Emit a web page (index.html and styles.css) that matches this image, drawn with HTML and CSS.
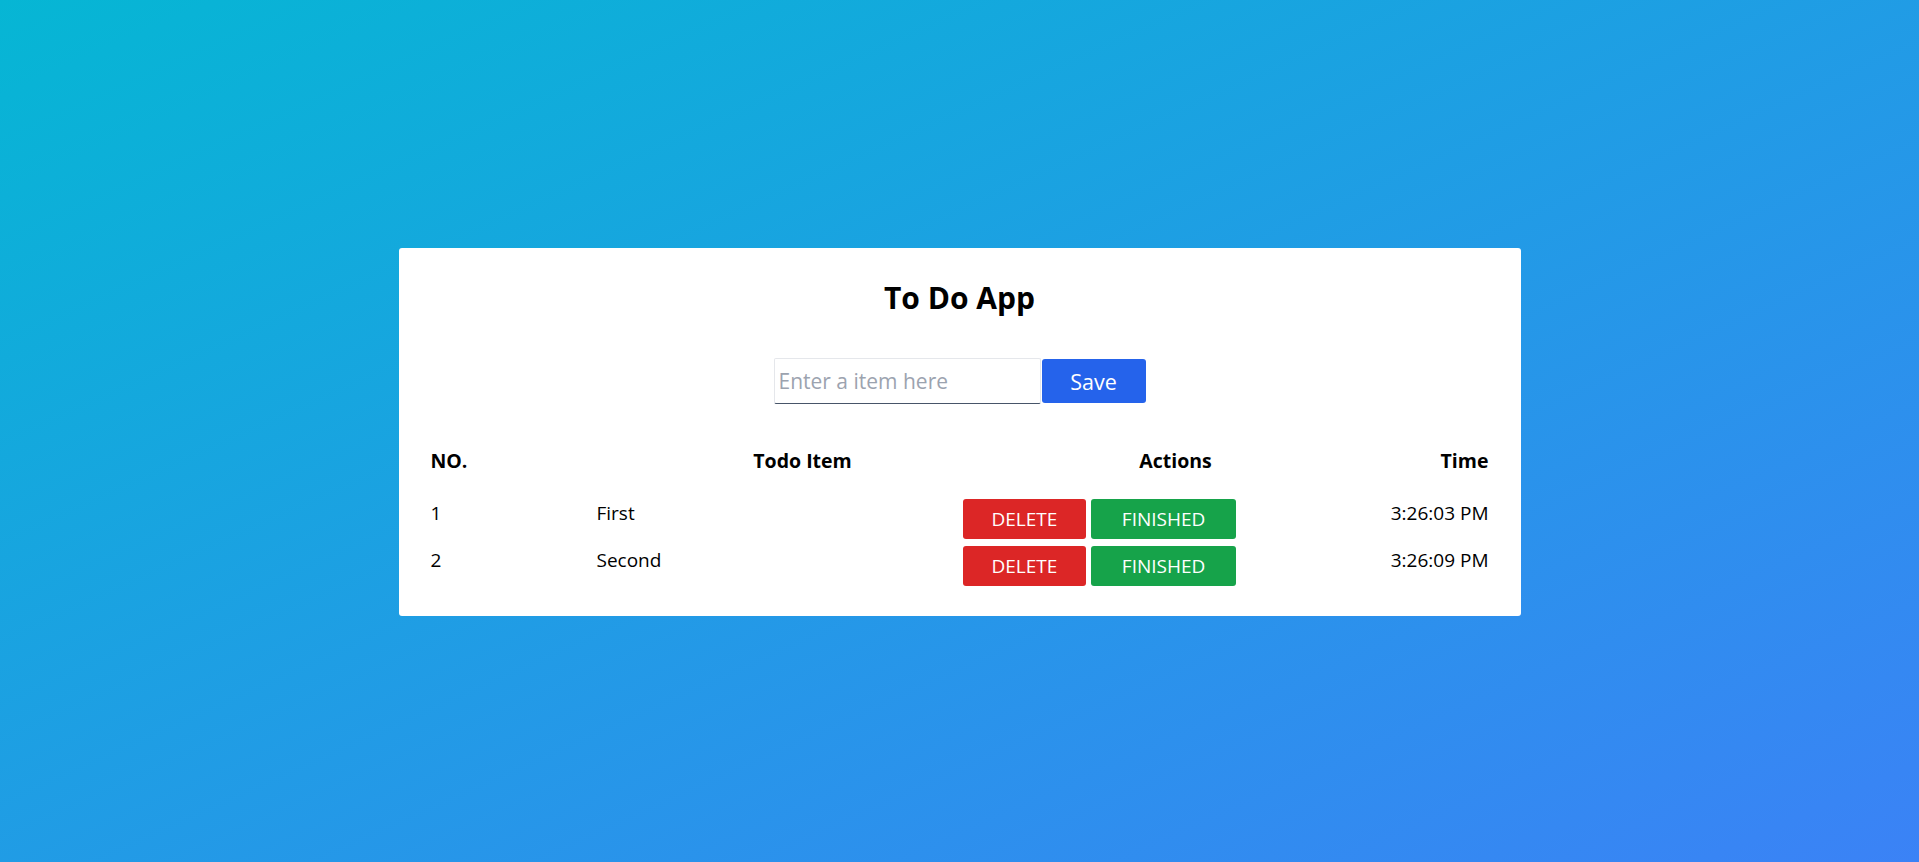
FILE: index.html
```html
<!DOCTYPE html>
<html lang="en">
<head>
<meta charset="utf-8">
<title>To Do App</title>
<link rel="stylesheet" href="styles.css">
</head>
<body>
<main class="page">
  <section class="card">
    <h1 class="title">To Do App</h1>
    <form class="entry">
      <input class="entry-input" type="text" placeholder="Enter a item here">
      <button class="btn btn-save" type="button">Save</button>
    </form>
    <table class="todo-table">
      <colgroup>
        <col class="col-no">
        <col class="col-item">
        <col class="col-actions">
        <col class="col-time">
      </colgroup>
      <thead>
        <tr>
          <th class="th-no">NO.</th>
          <th class="th-item">Todo Item</th>
          <th class="th-actions">Actions</th>
          <th class="th-time">Time</th>
        </tr>
      </thead>
      <tbody>
        <tr>
          <td class="td-text">1</td>
          <td class="td-text">First</td>
          <td class="td-actions">
            <div class="actions">
              <button class="btn btn-delete" type="button">DELETE</button>
              <button class="btn btn-finish" type="button">FINISHED</button>
            </div>
          </td>
          <td class="td-text td-time">3:26:03 PM</td>
        </tr>
        <tr>
          <td class="td-text">2</td>
          <td class="td-text">Second</td>
          <td class="td-actions">
            <div class="actions">
              <button class="btn btn-delete" type="button">DELETE</button>
              <button class="btn btn-finish" type="button">FINISHED</button>
            </div>
          </td>
          <td class="td-text td-time">3:26:09 PM</td>
        </tr>
      </tbody>
    </table>
  </section>
</main>
</body>
</html>
```
FILE: styles.css
```css
* {
  box-sizing: border-box;
}

html, body {
  margin: 0;
  height: 100%;
}

body {
  font-family: "Open Sans", "Noto Sans", sans-serif;
  color: #000;
  background: linear-gradient(to bottom right, #06b6d4, #3b82f6);
}

.page {
  height: 100%;
  display: flex;
  align-items: center;
  justify-content: center;
  padding-top: 2px;
}

.card {
  width: 1122px;
  background: #fff;
  border-radius: 3px;
  padding: 32px 32px 27px;
}

.title {
  margin: 0;
  font-size: 30px;
  line-height: 36px;
  font-weight: 700;
  text-align: center;
}

.entry {
  margin: 42px 0 0;
  display: flex;
  justify-content: center;
  align-items: center;
}

.entry-input {
  width: 267px;
  height: 46px;
  margin: 0 1px 0 0;
  padding: 0 4px;
  border: 1px solid #e5e7eb;
  border-bottom-color: #475569;
  border-radius: 2px;
  font-family: inherit;
  font-size: 21px;
  color: #111;
  outline: none;
}

.entry-input::placeholder {
  color: #9ca3af;
}

.btn {
  font-family: inherit;
  font-size: 19px;
  color: #fff;
  border: none;
  border-radius: 3px;
  cursor: pointer;
  padding: 0 30px;
}

.btn-save {
  width: 104px;
  height: 44px;
  padding: 0;
  font-size: 21.5px;
  background: #2563eb;
}

.todo-table {
  width: 100%;
  margin-top: 43px;
  border-collapse: collapse;
  table-layout: fixed;
  font-size: 19px;
}

.col-no { width: 166px; }
.col-item { width: 366px; }
.col-actions { width: 426px; }

.todo-table th {
  padding: 0 0 20px;
  font-weight: 700;
  font-size: 19.5px;
  line-height: 28px;
}

.th-no { text-align: left; }
.th-item { text-align: center; padding-left: 46px !important; }
.th-actions { text-align: center; }
.th-time { text-align: right; }

.todo-table td {
  height: 47px;
  padding: 0;
  vertical-align: middle;
  line-height: 28px;
}

.todo-table td.td-text {
  padding-bottom: 11px;
}

.td-time {
  text-align: right;
}

.actions {
  display: flex;
  gap: 5px;
}

.actions .btn {
  height: 40px;
  line-height: 40px;
}

.btn-delete {
  background: #dc2626;
  padding: 0 29px;
}

.btn-finish {
  background: #16a34a;
  padding: 0 30.5px;
}
```
